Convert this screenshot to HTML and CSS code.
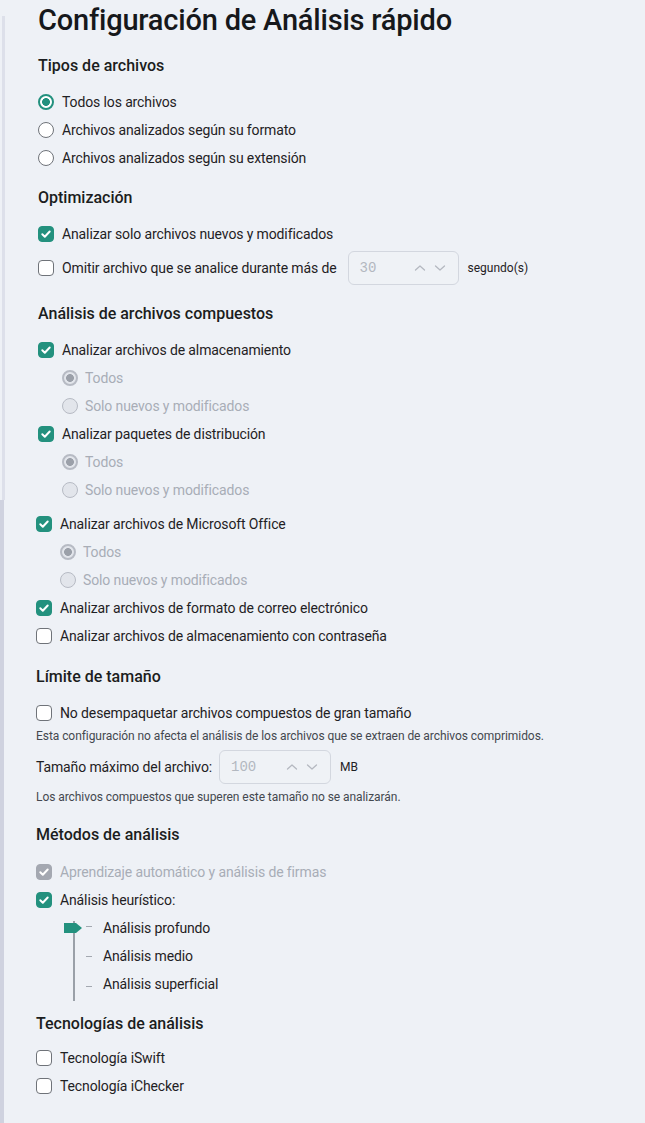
FILE: index.html
```html
<!DOCTYPE html>
<html lang="es">
<head>
<meta charset="utf-8">
<title>Configuración de Análisis rápido</title>
<link rel="stylesheet" href="styles.css">
</head>
<body>
<div class="page">
  <h1 class="title">Configuración de Análisis rápido</h1>

  <section class="section">
    <h2 class="section-title">Tipos de archivos</h2>
    <div class="row"><span class="radio on"></span><span class="label">Todos los archivos</span></div>
    <div class="row"><span class="radio"></span><span class="label">Archivos analizados según su formato</span></div>
    <div class="row"><span class="radio"></span><span class="label">Archivos analizados según su extensión</span></div>
  </section>

  <section class="section optim">
    <h2 class="section-title">Optimización</h2>
    <div class="row"><span class="box on"><svg viewBox="0 0 16 16" class="check"><path d="M4.3 8.3l2.5 2.4 4.9-5.2"/></svg></span><span class="label">Analizar solo archivos nuevos y modificados</span></div>
    <div class="row tall"><span class="box"></span><span class="label">Omitir archivo que se analice durante más de</span>
      <span class="num"><span class="num-val">30</span><span class="arrows"><svg viewBox="0 0 12 8"><path d="M1.5 6l4.5-4 4.5 4"/></svg><svg viewBox="0 0 12 8"><path d="M1.5 2l4.5 4 4.5-4"/></svg></span></span>
      <span class="unit">segundo(s)</span></div>
  </section>

  <section class="section compound">
    <h2 class="section-title">Análisis de archivos compuestos</h2>
    <div class="row"><span class="box on"><svg viewBox="0 0 16 16" class="check"><path d="M4.3 8.3l2.5 2.4 4.9-5.2"/></svg></span><span class="label">Analizar archivos de almacenamiento</span></div>
    <div class="row sub"><span class="radio dis on"></span><span class="label dis">Todos</span></div>
    <div class="row sub"><span class="radio dis"></span><span class="label dis">Solo nuevos y modificados</span></div>
    <div class="row"><span class="box on"><svg viewBox="0 0 16 16" class="check"><path d="M4.3 8.3l2.5 2.4 4.9-5.2"/></svg></span><span class="label">Analizar paquetes de distribución</span></div>
    <div class="row sub"><span class="radio dis on"></span><span class="label dis">Todos</span></div>
    <div class="row sub"><span class="radio dis"></span><span class="label dis">Solo nuevos y modificados</span></div>
    <div class="shifted">
      <div class="row"><span class="box on"><svg viewBox="0 0 16 16" class="check"><path d="M4.3 8.3l2.5 2.4 4.9-5.2"/></svg></span><span class="label">Analizar archivos de Microsoft Office</span></div>
      <div class="row sub"><span class="radio dis on"></span><span class="label dis">Todos</span></div>
      <div class="row sub"><span class="radio dis"></span><span class="label dis">Solo nuevos y modificados</span></div>
      <div class="row"><span class="box on"><svg viewBox="0 0 16 16" class="check"><path d="M4.3 8.3l2.5 2.4 4.9-5.2"/></svg></span><span class="label">Analizar archivos de formato de correo electrónico</span></div>
      <div class="row"><span class="box"></span><span class="label">Analizar archivos de almacenamiento con contraseña</span></div>
    </div>
  </section>

  <div class="shifted-left">
    <section class="section limit">
      <h2 class="section-title">Límite de tamaño</h2>
      <div class="row"><span class="box"></span><span class="label">No desempaquetar archivos compuestos de gran tamaño</span></div>
      <p class="note">Esta configuración no afecta el análisis de los archivos que se extraen de archivos comprimidos.</p>
      <div class="size-row"><span class="label">Tamaño máximo del archivo:</span>
        <span class="num"><span class="num-val">100</span><span class="arrows"><svg viewBox="0 0 12 8"><path d="M1.5 6l4.5-4 4.5 4"/></svg><svg viewBox="0 0 12 8"><path d="M1.5 2l4.5 4 4.5-4"/></svg></span></span>
        <span class="unit">MB</span></div>
      <p class="note note-after">Los archivos compuestos que superen este tamaño no se analizarán.</p>
    </section>

    <section class="section methods">
      <h2 class="section-title">Métodos de análisis</h2>
      <div class="row"><span class="box dis"><svg viewBox="0 0 16 16" class="check"><path d="M4.3 8.3l2.5 2.4 4.9-5.2"/></svg></span><span class="label dis">Aprendizaje automático y análisis de firmas</span></div>
      <div class="row"><span class="box on"><svg viewBox="0 0 16 16" class="check"><path d="M4.3 8.3l2.5 2.4 4.9-5.2"/></svg></span><span class="label">Análisis heurístico:</span></div>
      <div class="slider">
        <span class="track"></span>
        <svg class="thumb" viewBox="0 0 18 10"><path d="M0 0h12l6 5-6 5H0z"/></svg>
        <div class="level"><span class="tick up"></span><span class="label">Análisis profundo</span></div>
        <div class="level"><span class="tick"></span><span class="label">Análisis medio</span></div>
        <div class="level"><span class="tick down"></span><span class="label">Análisis superficial</span></div>
      </div>
    </section>

    <section class="section tech">
      <h2 class="section-title">Tecnologías de análisis</h2>
      <div class="row"><span class="box"></span><span class="label">Tecnología iSwift</span></div>
      <div class="row"><span class="box"></span><span class="label">Tecnología iChecker</span></div>
    </section>
  </div>
</div>
</body>
</html>
```
FILE: styles.css
```css
* { box-sizing: border-box; }
html, body { margin: 0; padding: 0; }
body {
  min-height: 1123px;
  background-color: #eef1f6;
  background-image:
    linear-gradient(#cfd2df, #cfd2df),
    linear-gradient(#dde0ea, #dde0ea);
  background-repeat: no-repeat;
  background-position: 0 500px, 2px 16px;
  background-size: 4px 700px, 3px 484px;
  font-family: Roboto, "Liberation Sans", sans-serif;
  font-size: 14px;
  color: #1f2124;
}
.page { padding: 2px 0 0 38px; }
.title {
  margin: 0 0 16px;
  font-size: 29px;
  line-height: 36px;
  font-weight: 500;
  color: #16181b;
  letter-spacing: -0.2px;
}
.section { margin-bottom: 14px; }
.section.optim { margin-bottom: 16px; }
.section.compound { margin-bottom: 15px; }
.section.limit { margin-bottom: 18px; }
.section.methods { margin-bottom: 15px; }
.section-title {
  margin: 0 0 10px;
  font-size: 16px;
  line-height: 24px;
  font-weight: 500;
  color: #1b1d20;
}
.methods .section-title { margin-bottom: 11px; }
.tech .section-title { margin-bottom: 8px; }
.row {
  display: flex;
  align-items: center;
  height: 28px;
  gap: 8px;
}
.row.tall { height: 36px; margin-top: 2px; }
.row.tall .num { margin-left: 3px; }
.row.sub { padding-left: 24px; gap: 7px; }
.label { white-space: nowrap; letter-spacing: -0.12px; }
.label.dis { color: #a8adb6; }
.box {
  flex: none;
  width: 16px;
  height: 16px;
  border: 1.5px solid #6f7379;
  border-radius: 4px;
  background: #ffffff;
  display: flex;
  align-items: center;
  justify-content: center;
}
.box.on { background: #23917e; border-color: #23917e; }
.box.dis { background: #a4a8b1; border-color: #a4a8b1; }
.check { width: 16px; height: 16px; flex: none; }
.check path { fill: none; stroke: #ffffff; stroke-width: 2; stroke-linecap: round; stroke-linejoin: round; }
.radio {
  flex: none;
  width: 16px;
  height: 16px;
  border-radius: 50%;
  border: 1.5px solid #6f7379;
  background: #ffffff;
}
.radio.on {
  border: 2px solid #23917e;
  background: radial-gradient(circle, #23917e 0 3.6px, #ffffff 4.2px);
}
.radio.dis { border: 1.5px solid #b7bbc4; background: #e2e5eb; }
.radio.dis.on {
  border: 2px solid #b7bbc4;
  background: radial-gradient(circle, #9ba0a9 0 3.6px, #e2e5eb 4.2px);
}
.num {
  flex: none;
  width: 111px;
  height: 34px;
  border: 1px solid #d3d7df;
  border-radius: 6px;
  background: #eff2f6;
  display: flex;
  align-items: center;
  padding: 0 12px 0 11px;
}
.num-val {
  font-family: "Liberation Mono", "DejaVu Sans Mono", monospace;
  font-size: 14px;
  color: #b3b8c0;
}
.arrows { margin-left: auto; display: flex; gap: 8px; }
.arrows svg { width: 12px; height: 8px; }
.arrows path { fill: none; stroke: #b4b8c0; stroke-width: 1.3; stroke-linecap: round; stroke-linejoin: round; }
.unit { font-size: 12px; margin-left: 1px; color: #1f2124; }
.shifted { margin-top: 6px; margin-left: -2px; }
.shifted-left { margin-left: -2px; }
.note {
  margin: 1px 0 0;
  font-size: 12px;
  line-height: 16px;
  letter-spacing: -0.06px;
  color: #44484f;
}
.note-after { margin-top: 5px; }
.size-row {
  display: flex;
  align-items: center;
  height: 34px;
  margin-top: 6px;
  gap: 7px;
}
.size-row .num { width: 112px; }
.size-row .unit { margin-left: 2px; }
.slider {
  position: relative;
  margin-left: 26px;
}
.track {
  position: absolute;
  left: 11px;
  top: 7px;
  bottom: -4px;
  width: 2px;
  background: #9aa0a8;
}
.thumb {
  position: absolute;
  left: 2px;
  top: 9px;
  width: 18px;
  height: 10px;
}
.thumb path { fill: #23917e; }
.level {
  display: flex;
  align-items: center;
  height: 28px;
}
.level:last-child { height: 27px; }
.tick {
  flex: none;
  width: 6px;
  height: 1px;
  margin: 0 11px 0 24px;
  background: #a3a8b0;
}
.tick.up { transform: translateY(-2px); }
.tick.down { transform: translateY(3px); }
.level .label { color: #1f2124; }
```
